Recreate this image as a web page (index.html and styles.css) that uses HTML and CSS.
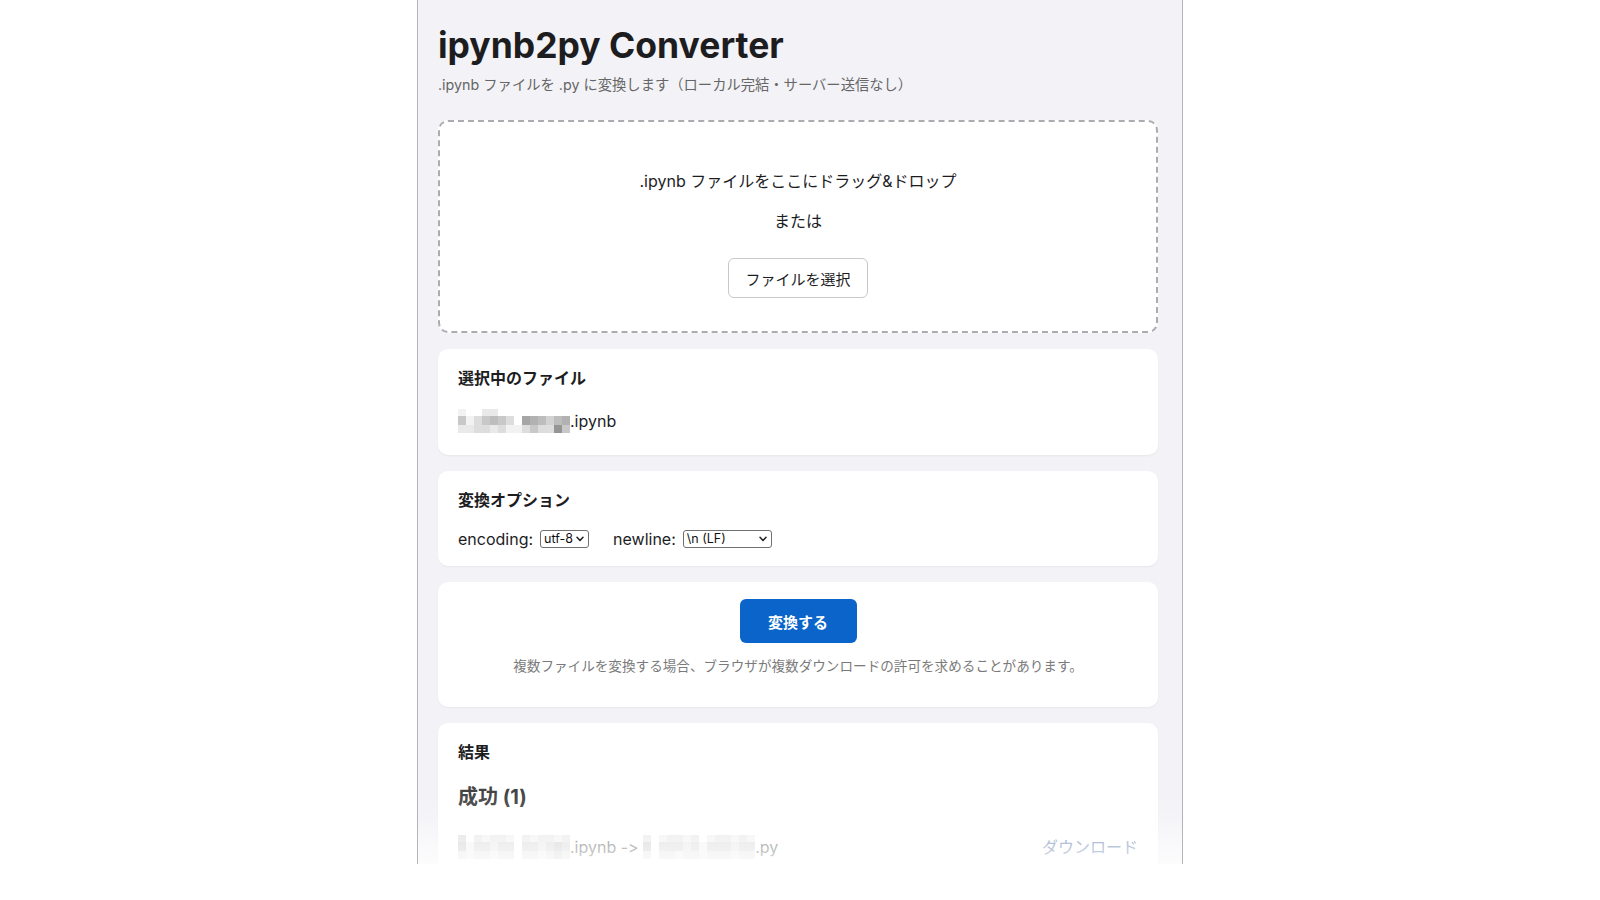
FILE: index.html
```html
<!DOCTYPE html>
<html lang="ja">
<head>
<meta charset="utf-8">
<title>ipynb2py Converter</title>
<link rel="stylesheet" href="styles.css">
</head>
<body>
<div class="frame">
  <h1 class="title">ipynb2py Converter</h1>
  <p class="subtitle">.ipynb ファイルを .py に変換します（ローカル完結・サーバー送信なし）</p>

  <div class="dropzone">
    <p class="dz-text">.ipynb ファイルをここにドラッグ&amp;ドロップ</p>
    <p class="dz-or">または</p>
    <button class="pick" type="button">ファイルを選択</button>
  </div>

  <section class="card card-files">
    <h2 class="card-title">選択中のファイル</h2>
    <div class="file-name">
      <span class="mosaic">
        <i class="m1"></i><i class="m0"></i><i class="m0"></i><i class="m2"></i><i class="m2"></i><i class="m0"></i><i class="m0"></i><i class="m0"></i><i class="m0"></i><i class="m0"></i><i class="m0"></i><i class="m0"></i><i class="m0"></i><i class="m0"></i>
        <i class="m5"></i><i class="m1"></i><i class="m3"></i><i class="m5"></i><i class="m6"></i><i class="m5"></i><i class="m3"></i><i class="m0"></i><i class="m8"></i><i class="m7"></i><i class="m6"></i><i class="m4"></i><i class="m6"></i><i class="m7"></i>
        <i class="m2"></i><i class="m2"></i><i class="m3"></i><i class="m3"></i><i class="m2"></i><i class="m3"></i><i class="m1"></i><i class="m1"></i><i class="m3"></i><i class="m5"></i><i class="m3"></i><i class="m3"></i><i class="m9"></i><i class="m5"></i>
      </span><span class="ext">.ipynb</span>
    </div>
  </section>

  <section class="card card-options">
    <h2 class="card-title">変換オプション</h2>
    <div class="options">
      <label class="opt">encoding:
        <span class="selwrap sel-enc">
          <select class="sel"><option>utf-8</option></select>
          <svg class="chev" width="8" height="6" viewBox="0 0 8 6"><polyline points="1,1.2 4,4.4 7,1.2" fill="none" stroke="#222" stroke-width="1.5" stroke-linecap="round" stroke-linejoin="round"/></svg>
        </span>
      </label>
      <label class="opt">newline:
        <span class="selwrap sel-nl">
          <select class="sel"><option>\n (LF)</option></select>
          <svg class="chev" width="8" height="6" viewBox="0 0 8 6"><polyline points="1,1.2 4,4.4 7,1.2" fill="none" stroke="#222" stroke-width="1.5" stroke-linecap="round" stroke-linejoin="round"/></svg>
        </span>
      </label>
    </div>
  </section>

  <section class="card card-run">
    <button class="convert" type="button">変換する</button>
    <p class="note">複数ファイルを変換する場合、ブラウザが複数ダウンロードの許可を求めることがあります。</p>
  </section>

  <section class="card card-result">
    <h2 class="card-title">結果</h2>
    <h3 class="success">成功 (1)</h3>
    <div class="result-row">
      <div class="result-name">
        <span class="mosaic mosaic-light">
          <i class="m3"></i><i class="m0"></i><i class="m2"></i><i class="m1"></i><i class="m2"></i><i class="m2"></i><i class="m1"></i><i class="m0"></i><i class="m2"></i><i class="m1"></i><i class="m2"></i><i class="m2"></i><i class="m1"></i><i class="m2"></i>
          <i class="m4"></i><i class="m1"></i><i class="m3"></i><i class="m3"></i><i class="m2"></i><i class="m3"></i><i class="m3"></i><i class="m0"></i><i class="m3"></i><i class="m3"></i><i class="m2"></i><i class="m3"></i><i class="m4"></i><i class="m3"></i>
          <i class="m2"></i><i class="m1"></i><i class="m2"></i><i class="m2"></i><i class="m1"></i><i class="m2"></i><i class="m2"></i><i class="m0"></i><i class="m2"></i><i class="m2"></i><i class="m1"></i><i class="m2"></i><i class="m3"></i><i class="m2"></i>
        </span><span class="ext">.ipynb -&gt; </span><span class="mosaic mosaic-light">
          <i class="m2"></i><i class="m0"></i><i class="m1"></i><i class="m2"></i><i class="m2"></i><i class="m1"></i><i class="m2"></i><i class="m0"></i><i class="m1"></i><i class="m2"></i><i class="m2"></i><i class="m1"></i><i class="m2"></i><i class="m1"></i>
          <i class="m4"></i><i class="m0"></i><i class="m3"></i><i class="m3"></i><i class="m3"></i><i class="m2"></i><i class="m3"></i><i class="m1"></i><i class="m3"></i><i class="m3"></i><i class="m3"></i><i class="m2"></i><i class="m3"></i><i class="m3"></i>
          <i class="m2"></i><i class="m0"></i><i class="m2"></i><i class="m2"></i><i class="m1"></i><i class="m2"></i><i class="m2"></i><i class="m1"></i><i class="m2"></i><i class="m2"></i><i class="m2"></i><i class="m1"></i><i class="m2"></i><i class="m2"></i>
        </span><span class="ext">.py</span>
      </div>
      <a class="download" href="#">ダウンロード</a>
    </div>
  </section>

  <div class="fade"></div>
</div>
</body>
</html>
```

FILE: styles.css
```css
* { box-sizing: border-box; }

html, body {
  margin: 0;
  padding: 0;
  background: #ffffff;
}

body {
  font-family: Inter, "Noto Sans CJK JP", "Noto Sans", sans-serif;
  font-feature-settings: "calt" 0, "liga" 0;
  color: #1d1d1f;
}

.frame {
  position: relative;
  width: 766px;
  height: 864px;
  margin: 0 auto;
  padding: 24px 24px 0 20px;
  background: #f3f3f7;
  border-left: 1px solid #b4b4b8;
  border-right: 1px solid #b4b4b8;
  overflow: hidden;
}

.title {
  margin: 0;
  font-size: 35.5px;
  line-height: 44px;
  font-weight: 700;
  color: #1d1d1f;
}

.subtitle {
  margin: 7px 0 0;
  font-size: 14.3px;
  line-height: 20px;
  color: #666666;
}

.dropzone {
  margin-top: 25px;
  height: 213px;
  padding: 47px 20px 0;
  background: #ffffff;
  border: 2px dashed #ababb0;
  border-radius: 10px;
  text-align: center;
  display: flex;
  flex-direction: column;
  align-items: center;
}

.dz-text,
.dz-or {
  margin: 0;
  font-size: 16px;
  line-height: 24px;
  color: #1d1d1f;
}

.dz-or { margin-top: 16px; }

.pick {
  margin-top: 25px;
  width: 140px;
  height: 40px;
  background: #ffffff;
  border: 1px solid #c9c9cc;
  border-radius: 6px;
  font-family: inherit;
  font-size: 15px;
  color: #1d1d1f;
  padding: 0;
}

.card {
  margin-top: 16px;
  background: #ffffff;
  border-radius: 10px;
  padding: 17px 20px 0;
  box-shadow: 0 1px 2px rgba(0, 0, 0, 0.05);
}

.card-title {
  margin: 0;
  font-size: 16px;
  line-height: 24px;
  font-weight: 700;
  color: #1d1d1f;
}

.card-files { height: 106px; }

.file-name {
  margin-top: 19px;
  display: flex;
  align-items: center;
  font-size: 16px;
  line-height: 24px;
  color: #1d1d1f;
}

.mosaic {
  display: inline-grid;
  grid-template-columns: repeat(14, 8px);
  grid-template-rows: 7px 9px 8px;
  flex: none;
}

.mosaic i { display: block; }

.m0 { background: #ffffff; }
.m1 { background: #f2f2f2; }
.m2 { background: #e9e9e9; }
.m3 { background: #dddddd; }
.m4 { background: #d2d2d2; }
.m5 { background: #c8c8c8; }
.m6 { background: #bdbdbd; }
.m7 { background: #b2b2b2; }
.m8 { background: #a6a6a6; }
.m9 { background: #959595; }

.card-options { height: 95px; }

.options {
  margin-top: 15px;
  display: flex;
  align-items: center;
  gap: 24px;
  height: 24px;
}

.opt {
  display: flex;
  align-items: center;
  gap: 7px;
  font-size: 16px;
  line-height: 24px;
  color: #1d1d1f;
}

.selwrap {
  position: relative;
  display: inline-flex;
  height: 18px;
}

.sel {
  -webkit-appearance: none;
  appearance: none;
  height: 18px;
  margin: 0;
  padding: 0 14px 0 3px;
  border: 1px solid #707070;
  border-radius: 3px;
  background: #ffffff;
  font-family: Inter, "Liberation Sans", sans-serif;
  font-size: 12.5px;
  line-height: 16px;
  color: #111111;
}

.sel-enc .sel { width: 49px; }
.sel-nl .sel { width: 89px; }

.chev {
  position: absolute;
  right: 5px;
  top: 6px;
  pointer-events: none;
}

.card-run {
  height: 125px;
  display: flex;
  flex-direction: column;
  align-items: center;
}

.convert {
  width: 117px;
  height: 44px;
  border: none;
  border-radius: 6px;
  background: #0a64c9;
  color: #ffffff;
  font-family: inherit;
  font-size: 15px;
  font-weight: 700;
  padding: 0;
}

.note {
  margin: 13px 0 0;
  font-size: 13.6px;
  line-height: 20px;
  color: #7a7a7a;
}

.card-result { height: 200px; }

.success {
  margin: 19px 0 0;
  font-size: 20px;
  line-height: 28px;
  font-weight: 700;
  color: #444444;
}

.result-row {
  margin-top: 24px;
  display: flex;
  align-items: center;
  justify-content: space-between;
  height: 24px;
}

.result-name {
  display: flex;
  align-items: center;
  font-size: 16px;
  line-height: 24px;
  color: #6a6a6a;
}

.result-name .ext { white-space: pre; }

.download {
  font-size: 16px;
  line-height: 24px;
  color: #6480ad;
  text-decoration: none;
}

.fade {
  position: absolute;
  left: 0;
  right: 0;
  bottom: 0;
  height: 72px;
  background: linear-gradient(to bottom,
    rgba(255, 255, 255, 0) 0%,
    rgba(255, 255, 255, 0.15) 35%,
    rgba(255, 255, 255, 0.55) 75%,
    rgba(255, 255, 255, 0.75) 100%);
  pointer-events: none;
}
```
